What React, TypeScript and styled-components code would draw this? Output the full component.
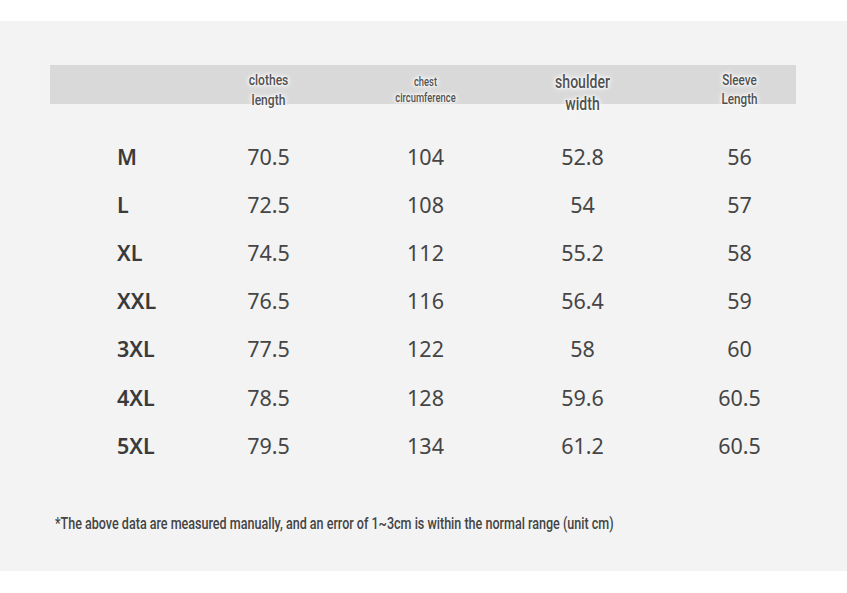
import React from "react";
import styled, { createGlobalStyle } from "styled-components";

const Global = createGlobalStyle`
  html, body { margin: 0; padding: 0; background: #ffffff; }
  body { font-family: "Noto Sans", "DejaVu Sans", sans-serif; }
`;

const Page = styled.div`
  width: 847px;
  height: 593px;
  padding-top: 21px;
  box-sizing: border-box;
  background: #ffffff;
`;

const Panel = styled.section`
  height: 550px;
  background: #f3f3f3;
  padding: 44px 51px 0 50px;
  box-sizing: border-box;
  display: flex;
  flex-direction: column;
`;

const cols = "140px 157px 157px 157px 157px";

const HeaderBar = styled.div`
  height: 39px;
  background: #d9d9d9;
  display: grid;
  grid-template-columns: ${cols};
  align-items: center;
`;

const HeadCell = styled.div<{ $size: number; $gap: number; $shift: number }>`
  display: flex;
  flex-direction: column;
  align-items: center;
  font-family: Roboto, "DejaVu Sans Condensed", sans-serif;
  font-weight: 500;
  color: #505050;
  font-size: ${(p) => p.$size}px;
  line-height: ${(p) => p.$gap}px;
  transform: translateY(${(p) => p.$shift}px) scaleX(0.78);
  text-shadow: 0 0 2px #fff, 0 0 4px #fff, 0 0 6px #fafafa, 0 0 9px #f6f6f6;
  white-space: nowrap;
`;

const Body = styled.div`
  margin-top: 28px;
  display: flex;
  flex-direction: column;
`;

const Row = styled.div`
  display: grid;
  grid-template-columns: ${cols};
  height: 48.2px;
  align-items: center;
`;

const SizeLabel = styled.div`
  padding-left: 67px;
  font-size: 21.5px;
  font-weight: 600;
  color: #3a3a3a;
`;

const Value = styled.div`
  text-align: center;
  font-size: 21.5px;
  font-weight: 400;
  color: #454545;
`;

const Note = styled.p`
  margin: 45px 0 0 5px;
  font-family: Roboto, "DejaVu Sans Condensed", sans-serif;
  font-weight: 500;
  font-size: 15.7px;
  color: #444444;
  transform-origin: left center;
  transform: scaleX(0.8);
  white-space: nowrap;
`;

const headers = [
  { lines: ["clothes", "length"], size: 15.5, gap: 20, shift: 3 },
  { lines: ["chest", "circumference"], size: 12, gap: 16, shift: 3 },
  { lines: ["shoulder", "width"], size: 18, gap: 22, shift: 6 },
  { lines: ["Sleeve", "Length"], size: 15, gap: 19, shift: 3 },
];

const rows: [string, string, string, string, string][] = [
  ["M", "70.5", "104", "52.8", "56"],
  ["L", "72.5", "108", "54", "57"],
  ["XL", "74.5", "112", "55.2", "58"],
  ["XXL", "76.5", "116", "56.4", "59"],
  ["3XL", "77.5", "122", "58", "60"],
  ["4XL", "78.5", "128", "59.6", "60.5"],
  ["5XL", "79.5", "134", "61.2", "60.5"],
];

export default function App() {
  return (
    <Page>
      <Global />
      <Panel>
        <HeaderBar>
          <div />
          {headers.map((h) => (
            <HeadCell key={h.lines[0]} $size={h.size} $gap={h.gap} $shift={h.shift}>
              <span>{h.lines[0]}</span>
              <span>{h.lines[1]}</span>
            </HeadCell>
          ))}
        </HeaderBar>
        <Body>
          {rows.map((r) => (
            <Row key={r[0]}>
              <SizeLabel>{r[0]}</SizeLabel>
              <Value>{r[1]}</Value>
              <Value>{r[2]}</Value>
              <Value>{r[3]}</Value>
              <Value>{r[4]}</Value>
            </Row>
          ))}
        </Body>
        <Note>
          *The above data are measured manually, and an error of 1~3cm is within the normal range (unit cm)
        </Note>
      </Panel>
    </Page>
  );
}
